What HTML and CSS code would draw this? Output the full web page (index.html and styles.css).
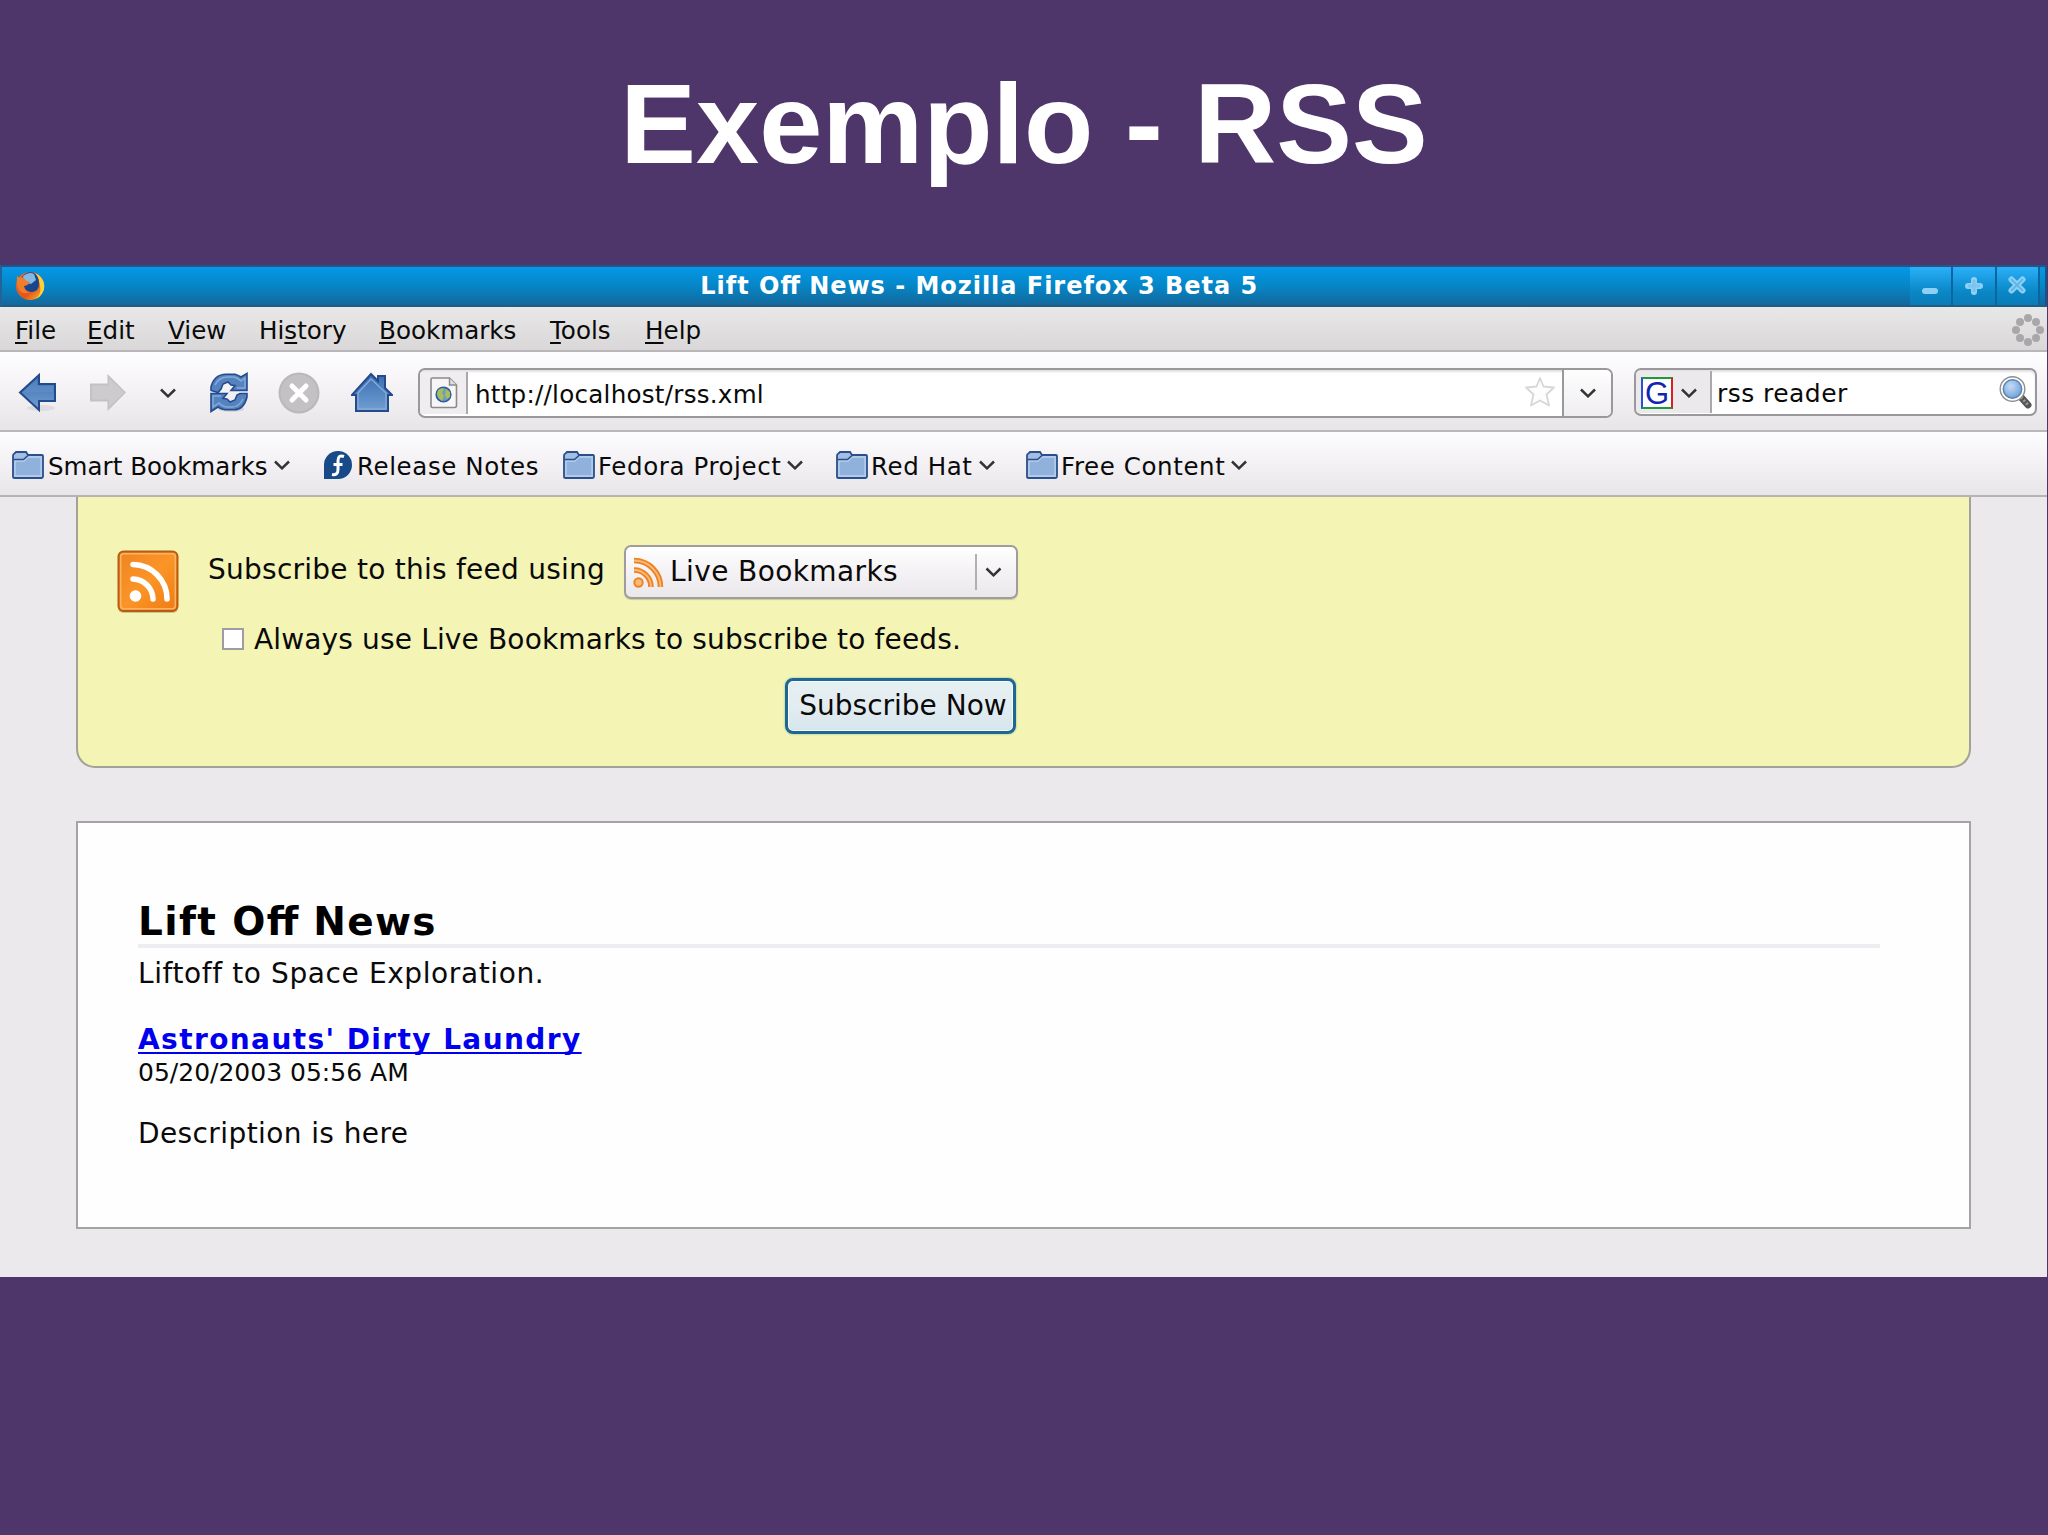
FILE: index.html
```html
<!DOCTYPE html>
<html lang="pt">
<head>
    <meta charset="UTF-8">
    <title>Exemplo - RSS</title>
    <link rel="stylesheet" href="styles.css">
</head>
<body>
    <!-- shared icons -->
    <svg class="defs" width="0" height="0">
        <defs>
            <linearGradient id="blue" x1="0" y1="0" x2="0" y2="1">
                <stop offset="0" stop-color="#3a6db2"/>
                <stop offset="1" stop-color="#709fd0"/>
            </linearGradient>
            <linearGradient id="orange" x1="0" y1="0" x2="1" y2="1">
                <stop offset="0" stop-color="#f08322"/>
                <stop offset=".5" stop-color="#fb9527"/>
                <stop offset="1" stop-color="#ef7a12"/>
            </linearGradient>
            <linearGradient id="fox" x1="0" y1="0" x2="1" y2="1">
                <stop offset="0" stop-color="#e8702a"/>
                <stop offset=".6" stop-color="#e4541b"/>
                <stop offset="1" stop-color="#fbc62c"/>
            </linearGradient>
            <radialGradient id="lens" cx=".4" cy=".35" r=".7">
                <stop offset="0" stop-color="#c3dcf6"/>
                <stop offset="1" stop-color="#6f9fd6"/>
            </radialGradient>
        </defs>
        <symbol id="folder" viewBox="0 0 32 28">
            <path d="M1 26V4.500Q1 3 2.500 2.500L4 1h10l2 3h14q1 0 1 1v20.500q0 1.500-1.500 1.500h-27Q1 27 1 26z" fill="#a3bfe2" stroke="#2b4f8c" stroke-width="1.800"/>
            <path d="M3 25V10h9l4-4h13v19z" fill="#8fb1dc" stroke="#b9cfec" stroke-width="1.300"/>
            <path d="M1.500 8.500h10L16 4.500" fill="none" stroke="#2b4f8c" stroke-width="1.600"/>
        </symbol>
        <symbol id="chevron" viewBox="0 0 16 10">
            <path d="M1 1.500L8 8.300l7-6.800" fill="none" stroke="#333" stroke-width="2.500"/>
        </symbol>
    </svg>

    <h1 class="slide-title">Exemplo - RSS</h1>

    <div class="window">
        <div class="titlebar">
            <svg class="firefox" width="30" height="30" viewBox="0 0 30 30">
                <circle cx="15" cy="15" r="14" fill="url(#fox)"/>
                <path d="M20 2a14 14 0 0 1 1 26q6-6 4-13-1-8-5-13z" fill="#fbd23a"/>
                <path d="M7 6Q11 0 18 1.500q6 3 6 11T17 21q-7 0-8-6z" fill="#17458f"/>
                <path d="M8 5q6-5 11-2l2 6-5 4-7-2z" fill="#83b9e6"/>
                <path d="M2 5l3 2 4-1q0 4 6 5-1 3-6 4 0 5 6 6-6 3-10-1-4-5-3-15z" fill="#ee7d2c"/>
            </svg>
            <div class="window-title">Lift O<span class="lig">ff</span> News - Mozilla Firefox 3 Beta 5</div>
            <div class="window-buttons">
                <span class="window-button"><svg width="20" height="20" viewBox="0 0 20 20"><path d="M5 15h10" stroke="#8fd0f5" stroke-width="6" stroke-linecap="round"/></svg></span>
                <span class="window-button"><svg width="20" height="20" viewBox="0 0 20 20"><path d="M10 4v12M4 10h12" stroke="#8fd0f5" stroke-width="6" stroke-linecap="round"/><path d="M10 4v12M4 10h12" stroke="#7ac4ef" stroke-width="3"/></svg></span>
                <span class="window-button"><svg width="20" height="20" viewBox="0 0 20 20"><path d="M4.500 3.500l11 11M15.500 3.500l-11 11" stroke="#8fd0f5" stroke-width="6" stroke-linecap="round"/><path d="M4 3l12 12M16 3L4 15" stroke="#62b6e6" stroke-width="2"/></svg></span>
            </div>
        </div>

        <div class="menubar">
            <span><u>F</u>ile</span>
            <span><u>E</u>dit</span>
            <span><u>V</u>iew</span>
            <span>Hi<u>s</u>tory</span>
            <span><u>B</u>ookmarks</span>
            <span><u>T</u>ools</span>
            <span><u>H</u>elp</span>
            <svg class="throbber" width="34" height="34" viewBox="0 0 34 34" fill="#a9a7a9">
                <circle cx="17" cy="5" r="4"/><circle cx="25" cy="9" r="4"/><circle cx="29" cy="17" r="4"/><circle cx="25" cy="25" r="4"/>
                <circle cx="17" cy="29" r="4"/><circle cx="9" cy="25" r="4"/><circle cx="5" cy="17" r="4"/><circle cx="9" cy="9" r="4"/>
            </svg>
        </div>

        <div class="navbar">
            <div class="nav-buttons">
                <svg width="40" height="42" viewBox="0 0 40 42">
                    <ellipse cx="23" cy="36" rx="14" ry="3" fill="#dedbe1"/>
                    <path d="M2 20.500L21 3v9h16v17H21v9z" fill="url(#blue)" stroke="#234a8b" stroke-width="2"/>
                    <path d="M5 20.500L19 7v7h16v6z" fill="#6c95cb" opacity=".4"/>
                </svg>
                <svg width="40" height="42" viewBox="0 0 40 42">
                    <path d="M38 20.500L19.500 2v9.500H2v18h17.500V39z" fill="#c3c1c3"/>
                    <path d="M36 20.500L21 6v7.500H4v14h17V35z" fill="#cdcbcd"/>
                </svg>
                <svg width="16" height="10"><use href="#chevron"/></svg>
                <svg width="38" height="42" viewBox="0 0 38 42">
                    <ellipse cx="21" cy="37" rx="13" ry="3" fill="#d5d2d9"/>
                    <path d="M1 18.500V15Q4 2.500 16 2.200h9Q28 3 31 5l6-3.500v17H21l4-5-4-.5-3-3-5 2-2 5-3 3.500z" fill="#5583bf" stroke="#244c8d" stroke-width="1.600"/>
                    <path d="M37 21.500V25Q34 37.500 24 37.800h-9Q11 37 8 35l-7 4.500v-18h16l-4 5 4 .5 3 3 5-2 2-5 3-1.500z" fill="#5583bf" stroke="#244c8d" stroke-width="1.600"/>
                    <path d="M5 13Q9 5 18 5h6q4 1 7 4l4-3v10h-8" fill="none" stroke="#86abd9" stroke-width="1.400"/>
                    <path d="M33 27Q29 35 22 35h-6q-4-1-7-4l-6 4V24h8" fill="none" stroke="#86abd9" stroke-width="1.400"/>
                </svg>
                <svg width="42" height="44" viewBox="0 0 42 44">
                    <circle cx="21" cy="22" r="20.500" fill="#bab8ba"/>
                    <circle cx="21" cy="22" r="18.500" fill="#c3c1c3"/>
                    <path d="M14 15l14 14M28 15L14 29" stroke="#fff" stroke-width="5" stroke-linecap="round"/>
                </svg>
                <svg width="42" height="42" viewBox="0 0 42 42">
                    <path d="M20 2l7 7V4h7v12l7 7h-4v16H5V23H1z" fill="url(#blue)" stroke="#234a8b" stroke-width="2"/>
                    <path d="M7 37V21L20 7l15 14v16z" fill="none" stroke="#86abd9" stroke-width="1.300"/>
                </svg>
            </div>
            <div class="urlbar">
                <div class="site-icon">
                    <svg width="28" height="32" viewBox="0 0 28 32">
                        <path d="M2.500 1h17l7 7v20.500q0 2-2 2h-22q-1.500 0-1.500-2v-26Q1 1 2.500 1z" fill="#f6f6f6" stroke="#8a8a8a" stroke-width="1.600"/>
                        <path d="M19.500 1v7h7" fill="#ddd" stroke="#8a8a8a" stroke-width="1.400"/>
                        <circle cx="13.500" cy="17.500" r="7.300" fill="#6c9cc4" stroke="#315c9c" stroke-width="1.600"/>
                        <path d="M8 13q4-3 6-1l-2 4 2 3-2 5q-4-3-5-7zM16 12l4 3v5l-3 2-2-4z" fill="#a9bd5a"/>
                    </svg>
                </div>
                <div class="url">http://localhost/rss.xml</div>
                <svg class="star" width="32" height="32" viewBox="0 0 32 32">
                    <path d="M16 2l3.500 8.500L30 11.500l-7.500 7 2.500 11-9-5-9 5 2.500-11L2 11.500l10.500-1z" fill="#fdfdfd" stroke="#d8d6d8" stroke-width="1.800" stroke-linejoin="round"/>
                </svg>
                <div class="url-drop"><svg width="16" height="10"><use href="#chevron"/></svg></div>
            </div>
            <div class="searchbar">
                <div class="engine">
                    <span class="google">G</span>
                    <svg width="16" height="10"><use href="#chevron"/></svg>
                </div>
                <div class="query">rss reader</div>
                <svg class="magnifier" width="34" height="34" viewBox="0 0 34 34">
                    <path d="M21 21l8 9" stroke="#555" stroke-width="7" stroke-linecap="round"/>
                    <path d="M22 22l7 8" stroke="#999" stroke-width="3" stroke-dasharray="2 2"/>
                    <circle cx="13.500" cy="14" r="12.300" fill="#fff" stroke="#8f8f8f" stroke-width="1.400"/>
                    <circle cx="13.500" cy="14" r="9.200" fill="url(#lens)" stroke="#5c83b5" stroke-width="1.500"/>
                </svg>
            </div>
        </div>

        <div class="bookmarks">
            <div class="bookmark smart"><svg width="32" height="28"><use href="#folder"/></svg><span>Smart Bookmarks</span><svg class="arrow" width="16" height="10"><use href="#chevron"/></svg></div>
            <div class="bookmark fedora">
                <svg width="28" height="28" viewBox="0 0 28 28">
                    <path d="M0 28V14A14 14 0 1 1 14 28z" fill="#174a86"/>
                    <path d="M20 5.500q-6-2-6 4v9q0 6-6 5M9.500 13.500h9" fill="none" stroke="#fff" stroke-width="3"/>
                </svg>
                <span>Release Notes</span>
            </div>
            <div class="bookmark"><svg width="32" height="28"><use href="#folder"/></svg><span>Fedora Project</span><svg class="arrow" width="16" height="10"><use href="#chevron"/></svg></div>
            <div class="bookmark"><svg width="32" height="28"><use href="#folder"/></svg><span>Red Hat</span><svg class="arrow" width="16" height="10"><use href="#chevron"/></svg></div>
            <div class="bookmark"><svg width="32" height="28"><use href="#folder"/></svg><span>Free Content</span><svg class="arrow" width="16" height="10"><use href="#chevron"/></svg></div>
        </div>

        <div class="page">
            <div class="subscribe">
                <svg class="feed-icon" width="62" height="64" viewBox="0 0 62 64">
                    <rect x="1" y="3" width="60" height="60" rx="5" fill="#b9a568" opacity=".6"/>
                    <rect x="1.500" y="1.500" width="59" height="59.500" rx="5" fill="url(#orange)" stroke="#b85c14" stroke-width="2"/>
                    <rect x="3.700" y="3.700" width="54.600" height="55" rx="3" fill="none" stroke="#fbb365" stroke-width="1.500"/>
                    <circle cx="18.500" cy="46" r="5.800" fill="#fff"/>
                    <path d="M16 29a20.500 20.500 0 0 1 20 20M16 14.500a34.500 34.500 0 0 1 34 34.500" fill="none" stroke="#fff" stroke-width="5.500" stroke-linecap="round"/>
                </svg>
                <div class="subscribe-form">
                    <div class="row">
                        <span class="label">Subscribe to this feed using</span>
                        <div class="select">
                            <svg width="31" height="31" viewBox="0 0 31 31" fill="none">
                                <path d="M1 13a17 17 0 0 1 17 17M1 3.500A26.500 26.500 0 0 1 27.500 30" stroke="#ee8223" stroke-width="5.500"/>
                                <path d="M1 13a17 17 0 0 1 17 17M1 3.500A26.500 26.500 0 0 1 27.500 30" stroke="#fbb978" stroke-width="1.800"/>
                                <circle cx="5.500" cy="25.500" r="4.200" fill="#fbb978" stroke="#ee8223" stroke-width="2"/>
                            </svg>
                            <span class="select-text">Live Bookmarks</span>
                            <span class="select-arrow"><svg width="17" height="10"><use href="#chevron"/></svg></span>
                        </div>
                    </div>
                    <div class="always"><span class="checkbox"></span><span>Always use Live Bookmarks to subscribe to feeds.</span></div>
                    <div class="button">Subscribe Now</div>
                </div>
            </div>

            <div class="feed">
                <h2>Lift O<span class="lig">ff</span> News</h2>
                <p class="subtitle">Liftoff to Space Exploration.</p>
                <div class="entry-title"><a href="#">Astronauts' Dirty Laundry</a></div>
                <div class="date">05/20/2003 05:56 AM</div>
                <p class="description">Description is here</p>
            </div>
        </div>
    </div>
</body>
</html>
```

FILE: styles.css
```css
* { box-sizing: border-box; }
body { margin: 0; height: 1535px; overflow: hidden; background: #4f366a; font-family: "DejaVu Sans", sans-serif; color: #0a0a0a; }
svg { display: block; flex: none; }
.defs { position: absolute; }
.lig { letter-spacing: 0; }

.slide-title { margin: 0; height: 265px; padding-top: 59px; font: bold 113.5px/130px "Liberation Sans", sans-serif; color: #fff; text-align: center; }

.window { width: 2047px; height: 1012px; background: #ebe9ec; }

.titlebar { display: flex; align-items: center; height: 42px; padding: 1px 0 1px 13px; background: linear-gradient(#0598e8, #0586c6 50%, #14689c); border-top: 2px solid #255488; border-bottom: 2px solid #215c85; border-left: 2px solid #21649a; }
.window-title { flex: 1; padding: 0 8px 0 12px; text-align: center; font-size: 24px; font-weight: bold; letter-spacing: 0.97px; color: #fff; white-space: nowrap; }
.window-buttons { display: flex; align-self: stretch; margin: -1px 0; padding-right: 5px; border-right: 2px solid #14568c; }
.window-button { display: flex; align-items: center; justify-content: center; width: 43.5px; background: linear-gradient(#2ab0fa, #0a87c6 65%, #0a7cb8); border-right: 2px solid #0c659e; }

.menubar { display: grid; grid-template-columns: 72px 81px 91px 120px 171px 95px 1fr 34px; align-items: center; height: 45px; padding: 2px 2px 0 15px; background: linear-gradient(#e9e8e9, #d9d7d8); border-bottom: 2px solid #b9b7b9; font-size: 24.6px; line-height: 41px; }
.menubar span { padding-top: 1px; }
.menubar u { text-decoration-thickness: 2px; text-underline-offset: 3px; text-decoration-skip-ink: none; }

.navbar { display: flex; align-items: center; height: 80px; padding-right: 10px; background: linear-gradient(#fefdfe, #f6f4f7 40%, #e8e5e9); border-bottom: 2px solid #bab8bb; }
.nav-buttons { display: grid; grid-template-columns: 75px 66px 54px 67px 74px 72px; align-items: center; justify-items: center; width: 418px; padding-top: 3px; }
.urlbar { display: flex; align-items: stretch; width: 1195px; height: 50px; margin-top: 3px; border: 2px solid #9a989b; border-radius: 7px; background: #fff; box-shadow: inset 0 2px 2px #e2e0e3; overflow: hidden; }
.site-icon { display: flex; align-items: center; justify-content: center; width: 48px; margin: 2px 0; padding-left: 2px; background: #efedf0; border-right: 2px solid #aaa8ab; }
.url { flex: 1; padding-left: 7px; font-size: 24.6px; line-height: 49px; letter-spacing: 0.25px; }
.star { margin: 6px 6px 0 0; }
.url-drop { display: flex; align-items: center; justify-content: center; width: 49px; background: linear-gradient(#fefefe, #efedf0); border-left: 2px solid #9a989b; }
.searchbar { display: flex; align-items: center; width: 403px; height: 48px; margin: 1px 0 0 21px; border: 2px solid #9a989b; border-radius: 7px; background: #fff; box-shadow: inset 0 2px 2px #e2e0e3; overflow: hidden; }
.engine { display: flex; align-items: center; gap: 8px; width: 76px; height: 42px; padding: 2px 0 0 5px; background: #ebe9ec; border-right: 2px solid #aaa8ab; }
.google { width: 32px; height: 32px; border: 2px solid #1f9a3a; border-left-color: #2a50d8; border-right-color: #d81e1e; background: #fff; font: 31px/29px "Liberation Sans", sans-serif; color: #1225b0; text-align: center; }
.query { flex: 1; padding: 4px 0 0 5px; font-size: 25px; line-height: 44px; letter-spacing: 0.45px; }
.magnifier { margin-right: 2px; }

.bookmarks { display: grid; grid-template-columns: 312px 239px 273px 190px auto; align-items: center; height: 65px; padding: 3px 0 0 12px; background: linear-gradient(#fdfcfe, #f4f2f5 45%, #e8e6e9); border-bottom: 2px solid #b5b3b5; font-size: 24.5px; letter-spacing: 0.6px; white-space: nowrap; }
.bookmark { display: flex; align-items: center; }
.bookmark span { padding: 2px 6px 0 3px; }
.bookmark.smart { letter-spacing: 0.05px; }
.bookmark.smart span { padding-left: 4px; }
.bookmark.fedora span { padding-left: 5px; }

.page { padding: 0 76px; }
.subscribe { display: flex; width: 1895px; height: 271px; padding: 53px 0 0 39px; background: #f4f4b5; border: 2px solid #a3a298; border-top: 0; border-radius: 0 0 19px 19px; font-size: 28px; letter-spacing: 0.15px; white-space: nowrap; }
.subscribe-form { width: 810px; margin-left: 29px; }
.row { display: flex; justify-content: space-between; margin-top: -5px; }
.label { line-height: 50px; letter-spacing: 0.25px; }
.select { display: flex; align-items: center; width: 394px; height: 54px; padding-left: 7px; background: linear-gradient(#fff, #f4f2f4 50%, #eae8ea); border: 2px solid #9f9c9b; border-radius: 7px; box-shadow: 0 1px 1px #c9c8a0; }
.select-text { flex: 1; padding-left: 6px; line-height: 50px; letter-spacing: 0.4px; }
.select-arrow { display: flex; align-items: center; justify-content: center; width: 41px; height: 36px; padding-right: 6px; border-left: 2px solid #b1afb1; }
.always { display: flex; align-items: center; gap: 10px; height: 40px; margin: 20px 0 0 14px; }
.checkbox { width: 22px; height: 22px; border: 2px solid #9f9ca4; background: #fff; }
.button { width: 231px; height: 56px; margin: 19px 0 0 577px; padding-left: 5px; border: 3px solid #1d6790; border-radius: 8px; background: linear-gradient(#e6f0f3, #e3edf1 50%, #d6e5ed); box-shadow: inset 0 0 0 1px #f5fafb, 0 0 2px #6fa5a8; letter-spacing: 0; line-height: 49px; text-align: center; }

.feed { width: 1895px; height: 408px; margin-top: 53px; padding: 74px 89px 0 60px; background: #fefefe; border: 2px solid #a5a3a6; }
.feed h2 { margin: 0; height: 51px; border-bottom: 4px solid #efedf1; color: #000; font-size: 39px; line-height: 49px; letter-spacing: 1.35px; }
.subtitle { margin: 6px 0 0; font-size: 28px; line-height: 40px; letter-spacing: 0.6px; }
.entry-title { margin-top: 26px; font-size: 28px; font-weight: bold; line-height: 40px; letter-spacing: 1.4px; }
.entry-title a { color: #0000ee; text-decoration-thickness: 2px; text-underline-offset: 3px; text-decoration-skip-ink: none; }
.date { margin-top: -2px; font-size: 25px; line-height: 30px; }
.description { margin: 26px 0 0; font-size: 28px; line-height: 40px; letter-spacing: 0.4px; }
```
